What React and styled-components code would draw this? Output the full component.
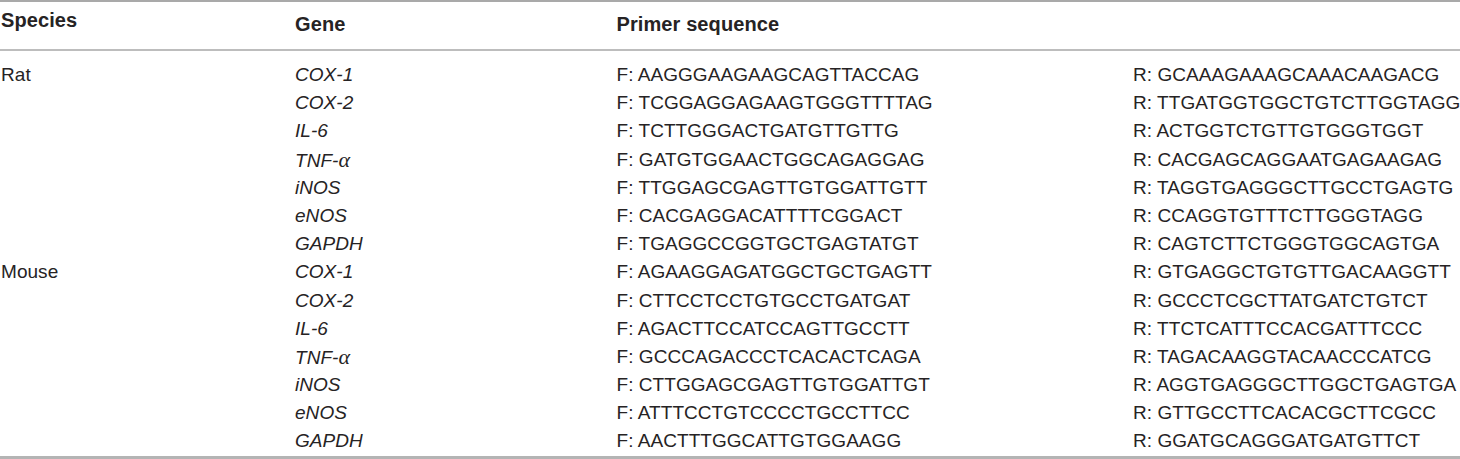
import styled, { createGlobalStyle } from "styled-components";

const GlobalStyle = createGlobalStyle`
  html, body {
    margin: 0;
    padding: 0;
    background: #fff;
  }
  body {
    font-family: "Liberation Sans", Arial, sans-serif;
    color: #262324;
  }
`;

const rows = [
  { species: "Rat", gene: "COX-1", f: "AAGGGAAGAAGCAGTTACCAG", r: "GCAAAGAAAGCAAACAAGACG" },
  { gene: "COX-2", f: "TCGGAGGAGAAGTGGGTTTTAG", r: "TTGATGGTGGCTGTCTTGGTAGG" },
  { gene: "IL-6", f: "TCTTGGGACTGATGTTGTTG", r: "ACTGGTCTGTTGTGGGTGGT" },
  { gene: "TNF-", alpha: true, f: "GATGTGGAACTGGCAGAGGAG", r: "CACGAGCAGGAATGAGAAGAG" },
  { gene: "iNOS", f: "TTGGAGCGAGTTGTGGATTGTT", r: "TAGGTGAGGGCTTGCCTGAGTG" },
  { gene: "eNOS", f: "CACGAGGACATTTTCGGACT", r: "CCAGGTGTTTCTTGGGTAGG" },
  { gene: "GAPDH", f: "TGAGGCCGGTGCTGAGTATGT", r: "CAGTCTTCTGGGTGGCAGTGA" },
  { species: "Mouse", gene: "COX-1", f: "AGAAGGAGATGGCTGCTGAGTT", r: "GTGAGGCTGTGTTGACAAGGTT" },
  { gene: "COX-2", f: "CTTCCTCCTGTGCCTGATGAT", r: "GCCCTCGCTTATGATCTGTCT" },
  { gene: "IL-6", f: "AGACTTCCATCCAGTTGCCTT", r: "TTCTCATTTCCACGATTTCCC" },
  { gene: "TNF-", alpha: true, f: "GCCCAGACCCTCACACTCAGA", r: "TAGACAAGGTACAACCCATCG" },
  { gene: "iNOS", f: "CTTGGAGCGAGTTGTGGATTGT", r: "AGGTGAGGGCTTGGCTGAGTGA" },
  { gene: "eNOS", f: "ATTTCCTGTCCCCTGCCTTCC", r: "GTTGCCTTCACACGCTTCGCC" },
  { gene: "GAPDH", f: "AACTTTGGCATTGTGGAAGG", r: "GGATGCAGGGATGATGTTCT" },
];

const App = () => {
  return (
    <>
      <GlobalStyle />
      <StyledTable>
        <StyledHead>
          <HeadCell $raise>Species</HeadCell>
          <HeadCell>Gene</HeadCell>
          <HeadCell>Primer sequence</HeadCell>
          <HeadCell />
        </StyledHead>
        <StyledBody>
          {rows.map((row, i) => (
            <StyledRow key={i}>
              <Cell $indent>{row.species || ""}</Cell>
              <GeneCell>
                {row.gene}
                {row.alpha && <Alpha>α</Alpha>}
              </GeneCell>
              <Cell>F: {row.f}</Cell>
              <Cell>R: {row.r}</Cell>
            </StyledRow>
          ))}
        </StyledBody>
      </StyledTable>
    </>
  );
};

const StyledTable = styled.div`
  width: 1460px;
  height: 459px;
  border-top: 2px solid #a9a9a9;
  border-bottom: 3px solid #b4b4b4;
  box-sizing: border-box;
  display: flex;
  flex-direction: column;
`;

const columns = "295px 321.5px 516.5px 1fr";

const StyledHead = styled.div`
  display: grid;
  grid-template-columns: ${columns};
  height: 49px;
  padding-bottom: 4px;
  box-sizing: border-box;
  border-bottom: 2px solid #bdbdbd;
  align-items: center;
`;

const HeadCell = styled.div`
  font-weight: 700;
  font-size: 20px;
  line-height: 24px;
  letter-spacing: 0.1px;
  padding-left: ${({ $raise }) => ($raise ? "1px" : "0")};
  margin-bottom: ${({ $raise }) => ($raise ? "8px" : "0")};
`;

const StyledBody = styled.div`
  padding-top: 10px;
  display: flex;
  flex-direction: column;
`;

const StyledRow = styled.div`
  display: grid;
  grid-template-columns: ${columns};
  height: 28.2px;
  line-height: 28.2px;
  font-size: 19px;
  letter-spacing: 0.05px;
  white-space: nowrap;
`;

const Cell = styled.div`
  padding-left: ${({ $indent }) => ($indent ? "1px" : "0")};
`;

const GeneCell = styled.div`
  font-style: italic;
`;

const Alpha = styled.span`
  font-family: "Liberation Serif", "Times New Roman", serif;
  font-size: 22px;
`;

export default App;
